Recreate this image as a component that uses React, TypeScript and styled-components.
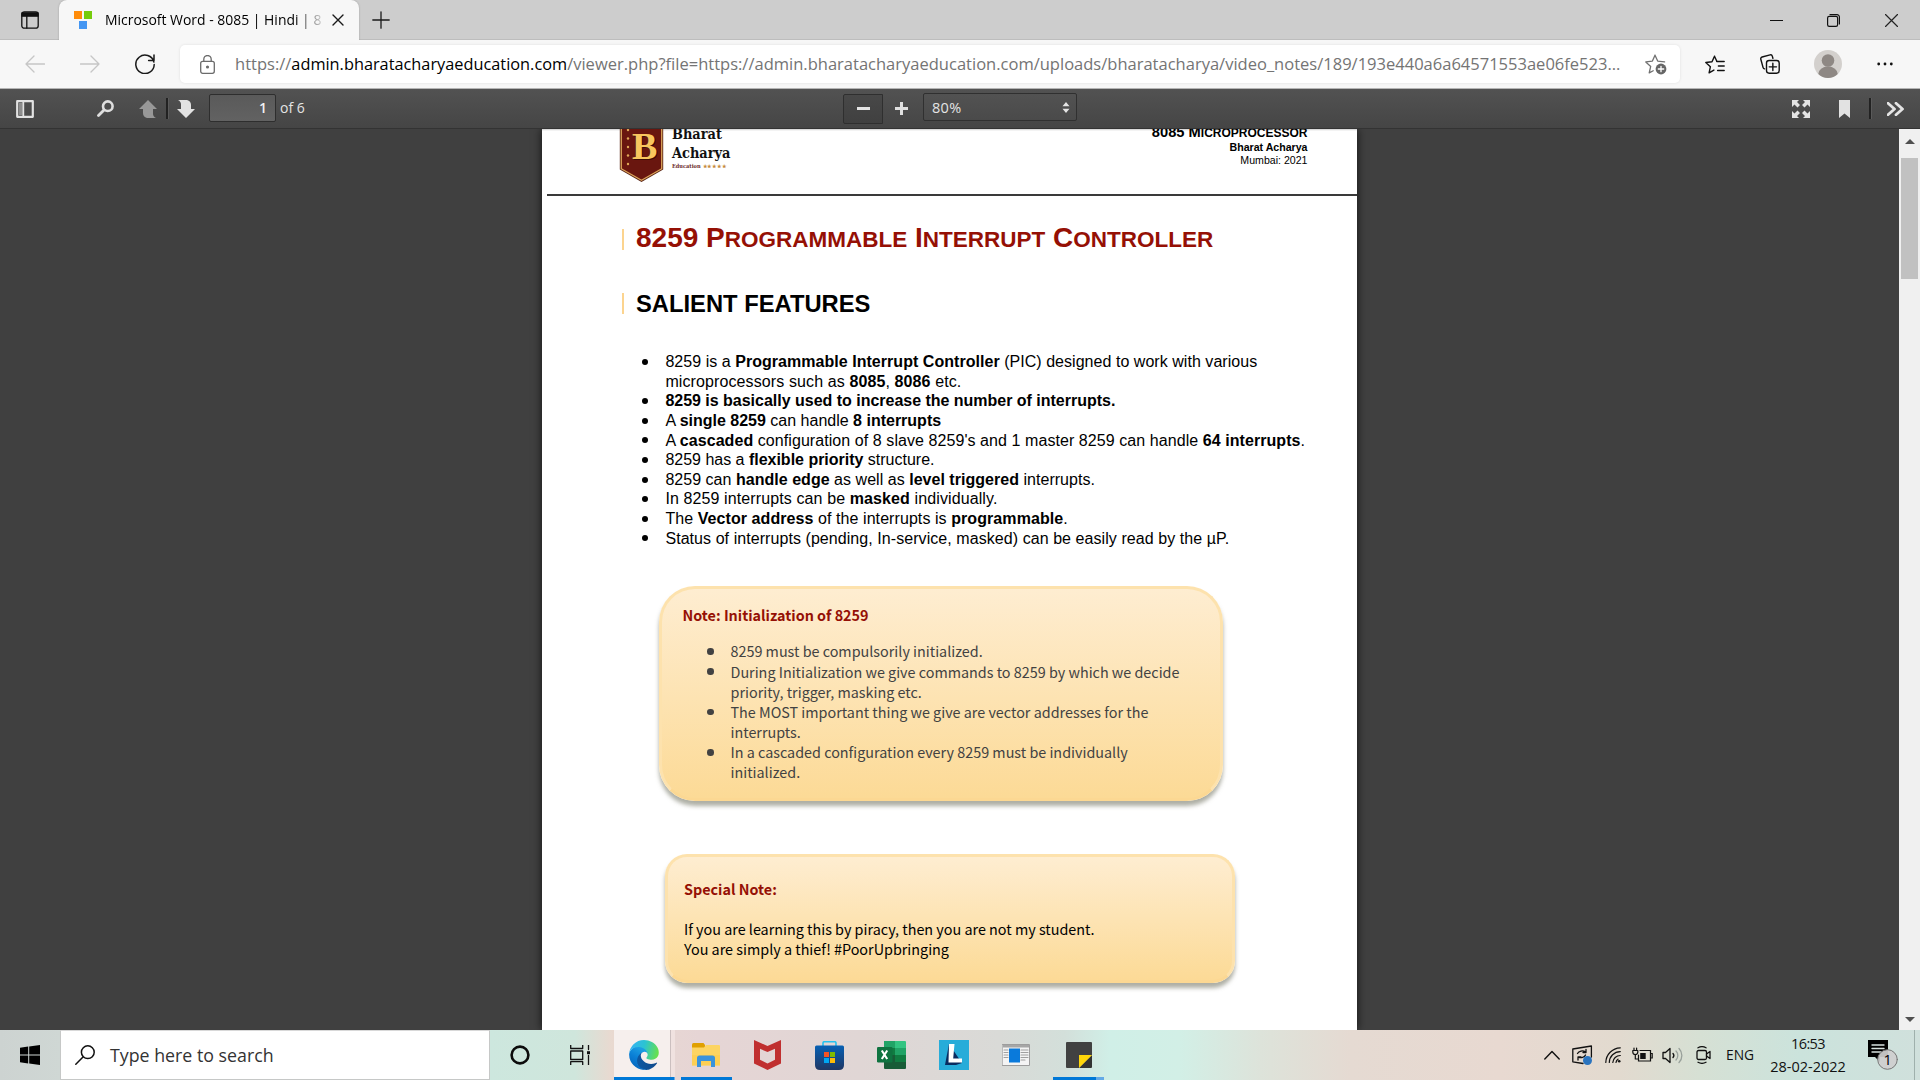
import React from 'react';
import styled, { createGlobalStyle } from 'styled-components';

const GlobalStyle = createGlobalStyle`
  html, body { margin: 0; padding: 0; overflow: hidden; }
  * { box-sizing: border-box; }
`;

const ui = '"Open Sans", "Noto Sans", sans-serif';
const body = '"Liberation Sans", Arial, sans-serif';
const notes = '"Noto Sans CJK SC", sans-serif';

const Screen = styled.div`
  width: 1920px;
  height: 1080px;
  display: flex;
  flex-direction: column;
  overflow: hidden;
  font-family: ${ui};
  white-space: nowrap;
`;

/* ---------- browser chrome ---------- */

const Icon = styled.svg<{ $w: number; $h: number; $ml?: number }>`
  display: block;
  flex: none;
  width: ${(p) => p.$w}px;
  height: ${(p) => p.$h}px;
  margin-left: ${(p) => p.$ml ?? 0}px;
  fill: none;
  stroke-linecap: round;
  stroke-linejoin: round;
`;

const TabStrip = styled.div`
  height: 40px;
  flex: none;
  display: flex;
  align-items: center;
  padding-right: 22px;
  background: #cdcdcd;
  box-shadow: inset 0 -1px 0 #bdbdbd;
`;

const Tab = styled.div`
  width: 300px;
  height: 40px;
  margin-left: 20px;
  padding-left: 15px;
  display: flex;
  align-items: center;
  background: #f7f7f7;
  border-radius: 8px 8px 0 0;
  box-shadow: 0 0 2px rgba(0, 0, 0, 0.25);
`;

const TabTitle = styled.div`
  width: 216px;
  margin-left: 13px;
  overflow: hidden;
  font-size: 13.95px;
  line-height: 22px;
  color: #000;
  mask-image: linear-gradient(90deg, #000 190px, transparent 222px);
`;

const Spacer = styled.div`
  flex: 1;
`;

const AddressBar = styled.div`
  height: 49px;
  flex: none;
  display: flex;
  align-items: center;
  padding-left: 25px;
  background: #f7f7f7;
  border-bottom: 1px solid #b4b4b4;
`;

const UrlField = styled.div`
  width: 1500px;
  height: 38px;
  margin-left: 25px;
  padding-left: 20px;
  display: flex;
  align-items: center;
  background: #fff;
  border-radius: 5px;
  box-shadow: 0 0 3px rgba(0, 0, 0, 0.1);
`;

const UrlText = styled.div`
  width: 1385px;
  margin-left: 20px;
  font-size: 16.52px;
  line-height: 24px;
  color: #747474;
`;

const Host = styled.span`
  font-size: 16.32px;
  color: #000;
`;

/* ---------- pdf toolbar ---------- */

const Toolbar = styled.div`
  height: 40px;
  flex: none;
  display: flex;
  align-items: center;
  padding: 0 15px 0 16px;
  background: linear-gradient(#525252, #454545);
  border-bottom: 1px solid #333;
  color: #e4e4e4;
  font-size: 14px;
`;

const Separator = styled.div<{ $ml: number }>`
  width: 2px;
  height: 21px;
  margin-left: ${(p) => p.$ml}px;
  background: #222;
  box-shadow: 1px 0 0 #5a5a5a;
`;

const PageInput = styled.div`
  width: 67px;
  height: 28px;
  margin: 0 0 2px 14px;
  padding-right: 8px;
  display: flex;
  align-items: center;
  justify-content: flex-end;
  font-weight: 600;
  color: #f2f2f2;
  background: linear-gradient(#5a5a5a, #626262);
  border: 1px solid #2e2e2e;
  border-radius: 2px;
`;

const PageCount = styled.div`
  width: 26px;
  margin: 0 0 2px 4px;
`;

const ZoomOutButton = styled.div`
  width: 40px;
  height: 30px;
  margin-left: 537px;
  padding-left: 13px;
  display: flex;
  align-items: center;
  background: linear-gradient(#484848, #404040);
  border: 1px solid #2f2f2f;
  border-radius: 2px 0 0 2px;
`;

const ZoomSelect = styled.div`
  width: 154px;
  height: 28px;
  margin: 0 0 3px 15px;
  padding: 0 6px 0 8px;
  display: flex;
  align-items: center;
  justify-content: space-between;
  font-size: 14.5px;
  letter-spacing: 0.3px;
  background: linear-gradient(#525252, #4a4a4a);
  border: 1px solid #303030;
  border-radius: 2px;
`;

/* ---------- document ---------- */

const Viewer = styled.div`
  height: 901px;
  flex: none;
  display: flex;
  overflow: hidden;
  background: #404040;
`;

const Page = styled.div`
  width: 815px;
  margin-left: 542px;
  display: flex;
  flex-direction: column;
  background: linear-gradient(#cfcfcf 0, #fff 2px);
  box-shadow: 0 0 9px rgba(0, 0, 0, 0.75);
`;

const PageHeader = styled.div`
  height: 67px;
  flex: none;
  margin-left: 5px;
  padding-left: 72px;
  display: flex;
  align-items: flex-end;
  border-bottom: 2px solid #3a3a3a;
`;

const Crest = styled(Icon)`
  margin-bottom: 11px;
`;

const Brand = styled.div`
  margin: 0 auto 23px 8px;
  font-family: 'DejaVu Serif Condensed', 'DejaVu Serif', serif;
  font-stretch: condensed;
  font-weight: 700;
  font-size: 14.4px;
  line-height: 18.3px;
  color: #111;
`;

const BrandSub = styled.div`
  display: flex;
  font-size: 5.6px;
  line-height: 9px;
  color: #6b2a2a;
`;

const Stars = styled.span`
  margin-left: 2px;
  font-size: 4.8px;
  letter-spacing: 0.9px;
  color: #c58a3c;
`;

const DocInfo = styled.div`
  margin: 0 49.5px 27px 0;
  font-family: ${body};
  font-size: 10.6px;
  line-height: 13px;
  text-align: right;
  color: #000;
`;

const DocTitle = styled.div`
  font-size: 14.7px;
  font-weight: 700;
  line-height: 15px;
`;

const SmallCaps = styled.span<{ $size: number }>`
  font-size: ${(p) => p.$size}px;
`;

const Heading = styled.div<{ $mt: number }>`
  height: 21px;
  flex: none;
  margin: ${(p) => p.$mt}px 0 0 79.5px;
  padding-left: 12.5px;
  display: flex;
  align-items: center;
  border-left: 2px solid #fcd48f;
  font-family: ${body};
  font-weight: 700;
`;

const ChapterTitle = styled.div`
  padding-bottom: 2px;
  font-size: 28px;
  line-height: 21px;
  color: #951005;
`;

const SectionTitle = styled.div`
  font-size: 23.75px;
  line-height: 21px;
  color: #000;
`;

const FeatureList = styled.div`
  margin: 38.3px 0 0 100px;
  font-family: ${body};
  font-size: 16px;
  color: #000;
`;

const FeatureLine = styled.div<{ $ls: number }>`
  height: 19.6px;
  display: flex;
  align-items: center;
  line-height: 19.6px;
  letter-spacing: ${(p) => p.$ls}px;
`;

const Dot = styled.span<{ $on: boolean; $size: number; $gap: number }>`
  width: ${(p) => p.$size}px;
  height: ${(p) => p.$size}px;
  margin-right: ${(p) => p.$gap}px;
  border-radius: 50%;
  background: ${(p) => (p.$on ? 'currentColor' : 'transparent')};
`;

const Callout = styled.div<{ $w: number; $h: number; $mt: number; $ml: number; $r: number; $pad: string }>`
  width: ${(p) => p.$w}px;
  height: ${(p) => p.$h}px;
  flex: none;
  margin: ${(p) => p.$mt}px 0 0 ${(p) => p.$ml}px;
  padding: ${(p) => p.$pad};
  border: 3px solid #fde2ad;
  border-bottom-color: #fcd893;
  border-radius: ${(p) => p.$r}px;
  background: linear-gradient(#feedd1, #fcda96);
  box-shadow: 0 5px 4px rgba(120, 122, 105, 0.6);
  font-family: ${notes};
  font-size: 14.36px;
  line-height: 20.2px;
`;

const CalloutTitle = styled.div<{ $mb: number }>`
  margin-bottom: ${(p) => p.$mb}px;
  font-weight: 700;
  color: #951005;
`;

const NoteLine = styled.div`
  height: 20.2px;
  margin-left: 24.5px;
  display: flex;
  align-items: center;
  color: #424242;
`;

const Scrollbar = styled.div`
  width: 21px;
  margin-left: auto;
  padding-top: 1px;
  display: flex;
  flex-direction: column;
  align-items: center;
  background: #f0f0f0;
`;

const Thumb = styled.div`
  width: 17px;
  height: 121px;
  margin: 14px 0 auto;
  background: #c1c1c1;
`;

const Caret = styled.div<{ $down?: boolean }>`
  margin: ${(p) => (p.$down ? '0 0 8px' : '9px 0 0')};
  border: 5px solid transparent;
  border-top: ${(p) => (p.$down ? '5px solid #505050' : '0')};
  border-bottom: ${(p) => (p.$down ? '0' : '5px solid #505050')};
`;

/* ---------- taskbar ---------- */

const Taskbar = styled.div`
  height: 50px;
  flex: none;
  display: flex;
  align-items: center;
  background: linear-gradient(
    90deg, #cdd3d1 0, #cfd7d4 60px, #cde7de 490px, #cfe6dc 575px, #e9d9d0 612px, #e6d5d5 700px,
    #e0d6d5 860px, #d9dad7 1000px, #d3dfda 1065px, #d0efe7 1110px, #d2efe6 1180px, #dde3da 1260px,
    #e5dad2 1350px, #e8d9d1 1500px, #e2dacf 1620px, #d6e0d4 1700px, #cbe3dc 1800px, #d0e0dc 1920px
  );
`;

const StartButton = styled.div`
  width: 60px;
  padding-left: 20px;
`;

const SearchBox = styled.div`
  width: 430px;
  height: 50px;
  padding-left: 14px;
  display: flex;
  align-items: center;
  background: #fff;
  border: 1px solid #c6c8c7;
  border-top-color: #d8d8d8;
`;

const SearchText = styled.div`
  margin: 0 0 1px 15px;
  font-size: 17.8px;
  color: #333;
`;

const TaskButton = styled.div<{ $w: number; $ml: number; $active?: boolean; $run?: boolean; $more?: number }>`
  width: ${(p) => p.$w}px;
  height: 50px;
  margin-left: ${(p) => p.$ml}px;
  padding-right: ${(p) => (p.$active ? 1 : 0)}px;
  display: flex;
  align-items: center;
  justify-content: center;
  background: ${(p) => (p.$active ? 'linear-gradient(90deg, #f6efed 56px, #cbbfbf 56px 57px, #f0e2e0 57px)' : 'none')};
  border-bottom: ${(p) => (p.$run ? '3px solid #0078d7' : '0')};
  border-image: ${(p) =>
    p.$more ? `linear-gradient(90deg, #0078d7 calc(100% - ${p.$more}px), #64a9e6 calc(100% - ${p.$more}px)) 3` : 'none'};
  & > svg { margin-top: ${(p) => (p.$run ? 3 : 0)}px; }
`;

const TrayGroup = styled.div`
  width: 376px;
  height: 50px;
  display: flex;
  align-items: center;
`;

const Language = styled.div`
  width: 28px;
  margin: 0 0 1px 15px;
  font-size: 13.8px;
  color: #111;
`;

const Clock = styled.div`
  width: 78px;
  margin-left: 15px;
  display: flex;
  flex-direction: column;
  align-items: center;
  font-size: 14.5px;
  line-height: 23px;
  color: #111;
`;

const Time = styled.div`
  letter-spacing: -0.6px;
`;

const ShowDesktop = styled.div`
  width: 6px;
  height: 50px;
  margin-left: auto;
  border-left: 1px solid #9fb0ac;
`;

/* ---------- content ---------- */

type Line = { t: string; ls: number; dot?: boolean };

const features: Line[] = [
  { t: '8259 is a *Programmable Interrupt Controller* (PIC) designed to work with various', ls: 0.04, dot: true },
  { t: 'microprocessors such as *8085*, *8086* etc.', ls: 0.11 },
  { t: '*8259 is basically used to increase the number of interrupts.*', ls: -0.015, dot: true },
  { t: 'A *single 8259* can handle *8 interrupts*', ls: 0, dot: true },
  { t: "A *cascaded* configuration of 8 slave 8259's and 1 master 8259 can handle *64 interrupts*.", ls: 0.07, dot: true },
  { t: '8259 has a *flexible priority* structure.', ls: -0.01, dot: true },
  { t: '8259 can *handle edge* as well as *level triggered* interrupts.', ls: 0.03, dot: true },
  { t: 'In 8259 interrupts can be *masked* individually.', ls: 0.11, dot: true },
  { t: 'The *Vector address* of the interrupts is *programmable*.', ls: 0.075, dot: true },
  { t: 'Status of interrupts (pending, In-service, masked) can be easily read by the µP.', ls: 0.065, dot: true },
];

const noteLines: [string, boolean][] = [
  ['8259 must be compulsorily initialized.', true],
  ['During Initialization we give commands to 8259 by which we decide', true],
  ['priority, trigger, masking etc.', false],
  ['The MOST important thing we give are vector addresses for the', true],
  ['interrupts.', false],
  ['In a cascaded configuration every 8259 must be individually', true],
  ['initialized.', false],
];

const Rich = ({ text }: { text: string }) => (
  <span>{text.split('*').map((part, i) => (i % 2 ? <b key={i}>{part}</b> : part))}</span>
);

const ChromeTop = () => (
  <TabStrip>
    <Icon $w={18} $h={18} $ml={21} viewBox="0 0 18 18" stroke="#111" strokeWidth="1.3">
      <rect x=".8" y=".8" width="16.4" height="16.4" rx="2.5" />
      <path d="M1 1.8h16v3.4H1z" fill="#111" />
      <path d="M5.8 5v12" />
    </Icon>
    <Tab>
      <Icon $w={18} $h={18} viewBox="0 0 18 18">
        <path d="M0 0h8v8H0z" fill="#ff8c0a" />
        <path d="M10 0h8v8h-8z" fill="#76cc0c" />
        <path d="M5 10h8v8H5z" fill="#4496f2" />
      </Icon>
      <TabTitle>Microsoft Word - 8085 | Hindi | 8</TabTitle>
      <Icon $w={12} $h={12} $ml={11} viewBox="0 0 12 12" stroke="#1a1a1a" strokeWidth="1.4">
        <path d="M1 1l10 10M11 1L1 11" />
      </Icon>
    </Tab>
    <Icon $w={18} $h={18} $ml={13} viewBox="0 0 18 18" stroke="#1a1a1a" strokeWidth="1.3">
      <path d="M9 .8v16.4M.8 9h16.4" />
    </Icon>
    <Spacer />
    <Icon $w={13} $h={13} viewBox="0 0 13 13" stroke="#111" strokeWidth="1.2" strokeLinecap="butt">
      <path d="M0 6.5h13" />
    </Icon>
    <Icon $w={13} $h={13} $ml={44} viewBox="0 0 13 13" stroke="#111" strokeWidth="1.2">
      <rect x=".6" y="2.4" width="10" height="10" rx="1.6" />
      <path d="M3 .6h7a2.4 2.4 0 0 1 2.4 2.4v7" />
    </Icon>
    <Icon $w={13} $h={13} $ml={45} viewBox="0 0 13 13" stroke="#222" strokeWidth="1.2">
      <path d="M.5.5l12 12M12.5.5l-12 12" />
    </Icon>
  </TabStrip>
);

const Address = () => (
  <AddressBar>
    <Icon $w={20} $h={18} viewBox="0 0 20 18" stroke="#c6c6c6" strokeWidth="1.3">
      <path d="M19.5 9H1M9 1L1 9l8 8" />
    </Icon>
    <Icon $w={20} $h={18} $ml={35} viewBox="0 0 20 18" stroke="#c6c6c6" strokeWidth="1.3">
      <path d="M.5 9H19M11 1l8 8-8 8" />
    </Icon>
    <Icon $w={20} $h={20} $ml={35} viewBox="0 0 20 20" stroke="#1a1a1a" strokeWidth="1.5">
      <path d="M18.9 8A9.2 9.2 0 1 0 19.2 10.5M19 1v5.6h-5.4" />
    </Icon>
    <UrlField>
      <Icon $w={15} $h={19} viewBox="0 0 15 19" stroke="#6b6b6b" strokeWidth="1.3">
        <rect x=".7" y="6.3" width="13.6" height="12" rx="2" />
        <path d="M3.8 6V4.2a3.7 3.7 0 0 1 7.4 0V6" />
        <circle cx="7.5" cy="12" r=".9" fill="#6b6b6b" />
      </Icon>
      <UrlText>
        https://<Host>admin.bharatacharyaeducation.com</Host>
        /viewer.php?file=https://admin.bharatacharyaeducation.com/uploads/bharatacharya/video_notes/189/193e440a6a64571553ae06fe523...
      </UrlText>
      <Icon $w={22} $h={21} $ml={25} viewBox="0 0 22 21" stroke="#707070" strokeWidth="1.3">
        <path d="M10 1.2l2.7 5.9 6.9.8M10 1.2L7.4 7.1l-6.6.8 4.9 4.500-1.500 6.500 4-2.200" />
        <circle cx="16" cy="15" r="5.400" fill="#666" stroke="none" />
        <path d="M16 12.300v5.400M13.300 15h5.400" stroke="#fff" />
      </Icon>
    </UrlField>
    <Icon $w={20} $h={19} $ml={25} viewBox="0 0 20 19" stroke="#111" strokeWidth="1.4">
      <path d="M9.500 1.200l2.300 5M9.500 1.200L7 6.800l-6.200.7 4.600 4.200-1.300 6.100 4.800-2.700" />
      <path d="M11.800 6.500h7.400M13.400 11h5.800M12.600 15.500h6.600" />
    </Icon>
    <Icon $w={20} $h={20} $ml={35} viewBox="0 0 20 20" stroke="#111" strokeWidth="1.4">
      <path d="M12.900 4.300l-.6-2.200A1.800 1.800 0 0 0 10.100 .9L2.100 3A1.800 1.800 0 0 0 .8 5.200l2.300 8.400a1.800 1.800 0 0 0 1.500 1.300" />
      <rect x="6.500" y="6.500" width="12.700" height="12.700" rx="2.600" />
      <path d="M12.850 9.200v7.300M9.200 12.850h7.300" />
    </Icon>
    <Icon $w={28} $h={28} $ml={34} viewBox="0 0 28 28">
      <circle cx="14" cy="14" r="14" fill="#d3d0cd" />
      <circle cx="14" cy="10.500" r="6.300" fill="#8e8884" />
      <path d="M4.300 24a9.700 7.500 0 0 1 19.400 0A14 14 0 0 1 4.300 24z" fill="#8e8884" />
    </Icon>
    <Icon $w={16} $h={4} $ml={35} viewBox="0 0 16 4">
      <g fill="#111">
        <circle cx="1.700" cy="2" r="1.400" />
        <circle cx="8" cy="2" r="1.400" />
        <circle cx="14.300" cy="2" r="1.400" />
      </g>
    </Icon>
  </AddressBar>
);

const PdfToolbar = () => (
  <Toolbar>
    <Icon $w={18} $h={18} viewBox="0 0 18 18">
      <path d="M1.200 1.200h15.600v15.600H1.200z" stroke="#e2e2e2" strokeWidth="2.200" />
      <path d="M3 3h3.500v12H3z" fill="#8d8d8d" />
      <path d="M7.300 2v14" stroke="#e2e2e2" strokeWidth="1.800" />
    </Icon>
    <Icon $w={17} $h={17} $ml={63} viewBox="0 0 17 17" stroke="#dedede">
      <circle cx="10.800" cy="6.200" r="4.800" strokeWidth="2.600" />
      <path d="M7 10l-5.500 5.500" strokeWidth="2.800" />
    </Icon>
    <Icon $w={18} $h={18} $ml={25} viewBox="0 0 18 18">
      <path d="M9 0l9 9h-4v4.500q0 3 3 4.500H8q-4-1-4-5V9H0z" fill="#989898" />
    </Icon>
    <Separator $ml={9} />
    <Icon $w={18} $h={18} $ml={9} viewBox="0 0 18 18">
      <path d="M9 18l9-9h-4V5q0-4-4-5H1q3 1.500 3 4.500V9H0z" fill="#e2e2e2" />
    </Icon>
    <PageInput>1</PageInput>
    <PageCount>of 6</PageCount>
    <ZoomOutButton>
      <Icon $w={13} $h={3} viewBox="0 0 13 3">
        <path d="M0 0h13v3H0z" fill="#e4e4e4" />
      </Icon>
    </ZoomOutButton>
    <Icon $w={13} $h={13} $ml={12} viewBox="0 0 13 13">
      <path d="M5 0h3v5h5v3H8v5H5V8H0V5h5z" fill="#e0e0e0" />
    </Icon>
    <ZoomSelect>
      80%
      <Icon $w={8} $h={11} viewBox="0 0 8 11">
        <path d="M4 0l3.500 4.200h-7zM4 11l3.500-4.200h-7z" fill="#e4e4e4" />
      </Icon>
    </ZoomSelect>
    <Spacer />
    <Icon $w={18} $h={18} viewBox="0 0 18 18">
      <path
        d="M0 0h7L5 2l3 3-2.500 2.500-3-3L0 7zM18 0v7l-2.500-2.500-3 3L10 5l3-3-2-2zM0 18v-7l2.500 2.500 3-3L8 13l-3 3 2 2zM18 18h-7l2-2-3-3 2.500-2.500 3 3L18 11z"
        fill="#e4e4e4"
      />
    </Icon>
    <Icon $w={11} $h={18} $ml={29} viewBox="0 0 11 18">
      <path d="M0 0h11v18l-5.500-4.500L0 18z" fill="#e2e2e2" />
    </Icon>
    <Separator $ml={19} />
    <Icon $w={18} $h={14} $ml={16} viewBox="0 0 18 14" stroke="#e4e4e4" strokeWidth="2.800" strokeLinecap="butt" strokeLinejoin="miter">
      <path d="M1 1.200L7.500 7 1 12.800M9 1.200L15.500 7 9 12.800" />
    </Icon>
  </Toolbar>
);

const Document = () => (
  <Page>
    <PageHeader>
      <Crest $w={45} $h={66} viewBox="0 0 45 66">
        <path d="M.8 0v52.500L22.500 65 44.200 52.500V0z" fill="#5a2416" />
        <path d="M2.300 0v51.700L22.500 63.300 42.700 51.700V0z" fill="#69160f" stroke="#dba35a" strokeWidth="1.300" />
        <g fill="#e0a857">
          <circle cx="9" cy="13" r="1.200" />
          <circle cx="9" cy="21.500" r="1.200" />
          <circle cx="9" cy="30" r="1.200" />
          <circle cx="9" cy="38.500" r="1.200" />
          <circle cx="9" cy="47" r="1.200" />
        </g>
        <text x="14" y="43" fontFamily="Liberation Serif" fontWeight="700" fontSize="38" fill="#3c0b07">B</text>
        <text x="13" y="42" fontFamily="Liberation Serif" fontWeight="700" fontSize="38" fill="#f8c65e">B</text>
      </Crest>
      <Brand>
        Bharat
        <br />
        Acharya
        <BrandSub>
          Education<Stars>★★★★★</Stars>
        </BrandSub>
      </Brand>
      <DocInfo>
        <DocTitle>
          8085 M<SmallCaps $size={12}>ICROPROCESSOR</SmallCaps>
        </DocTitle>
        <b>Bharat Acharya</b>
        <br />
        Mumbai: 2021
      </DocInfo>
    </PageHeader>
    <Heading $mt={32.5}>
      <ChapterTitle>
        8259 P<SmallCaps $size={22.5}>ROGRAMMABLE</SmallCaps> I<SmallCaps $size={22.5}>NTERRUPT</SmallCaps> C
        <SmallCaps $size={22.5}>ONTROLLER</SmallCaps>
      </ChapterTitle>
    </Heading>
    <Heading $mt={43.5}>
      <SectionTitle>SALIENT FEATURES</SectionTitle>
    </Heading>
    <FeatureList>
      {features.map((f) => (
        <FeatureLine key={f.t} $ls={f.ls}>
          <Dot $on={!!f.dot} $size={6} $gap={17.4} />
          <Rich text={f.t} />
        </FeatureLine>
      ))}
    </FeatureList>
    <Callout $w={564} $h={214.5} $mt={37.9} $ml={117} $r={36} $pad="16px 20.5px">
      <CalloutTitle $mb={16}>Note: Initialization of 8259</CalloutTitle>
      {noteLines.map(([t, dot]) => (
        <NoteLine key={t}>
          <Dot $on={dot} $size={6.5} $gap={17} />
          {t}
        </NoteLine>
      ))}
    </Callout>
    <Callout $w={570.5} $h={129} $mt={53.3} $ml={122.5} $r={22} $pad="22px 16.5px">
      <CalloutTitle $mb={20}>Special Note:</CalloutTitle>
      If you are learning this by piracy, then you are not my student.
      <br />
      You are simply a thief! #PoorUpbringing
    </Callout>
  </Page>
);

const EdgeIcon = () => (
  <Icon $w={30} $h={30} viewBox="0 0 257 259">
    <defs>
      <linearGradient id="e1" x1="63" y1="178" x2="241" y2="178" gradientUnits="userSpaceOnUse">
        <stop offset="0" stopColor="#0c59a4" />
        <stop offset="1" stopColor="#114a8b" />
      </linearGradient>
      <linearGradient id="e2" x1="120" y1="90" x2="40" y2="230" gradientUnits="userSpaceOnUse">
        <stop offset="0" stopColor="#1b9de2" />
        <stop offset=".5" stopColor="#0a7fd6" />
        <stop offset="1" stopColor="#0669bf" />
      </linearGradient>
      <linearGradient id="e3" x1="20" y1="70" x2="240" y2="130" gradientUnits="userSpaceOnUse">
        <stop offset="0" stopColor="#35b5ee" />
        <stop offset=".45" stopColor="#2bc3d2" />
        <stop offset="1" stopColor="#66e04f" />
      </linearGradient>
    </defs>
    <path
      fill="url(#e1)"
      d="M235.680 195.460a93.730 93.730 0 0 1-10.540 4.710 101.870 101.870 0 0 1-35.900 6.460c-47.320 0-88.540-32.550-88.540-74.320A31.480 31.480 0 0 1 117.130 105c-42.800 1.800-53.800 46.400-53.800 72.530 0 73.880 68.090 81.370 82.760 81.370 7.910 0 19.840-2.300 27-4.560l1.310-.44a128.340 128.340 0 0 0 66.600-52.800 4 4 0 0 0-5.320-5.640z"
    />
    <path
      fill="url(#e2)"
      d="M105.700 246.500a79.200 79.200 0 0 1-22.740-21.340 80.720 80.720 0 0 1 34.160-120c3.540-1.670 9.580-4.700 17.630-4.560a33.100 33.100 0 0 1 24.760 13.190 32.600 32.600 0 0 1 6.680 18.660c0-.2 24.500-79.640-80.100-79.640-43.900 0-86.090 36.900-86.090 73.400a130.150 130.150 0 0 0 12.110 56 128 128 0 0 0 156.380 67.110 75.550 75.550 0 0 1-62.780-8z"
    />
    <path
      fill="url(#e3)"
      d="M152.330 148.860c-.81 1.050-3.300 2.500-3.300 5.660 0 2.610 1.700 5.120 4.720 7.230 14.380 10 41.490 8.680 41.560 8.680a59.560 59.560 0 0 0 30.270-8.350 61.380 61.380 0 0 0 30.430-52.880c.26-22.410-8-37.310-11.340-43.910C223.450 23.870 177.720 0 128 0A128 128 0 0 0 0 126.200c.48-36.540 36.800-66.050 80-66.050 3.500 0 23.460.34 42 10.070 16.340 8.580 24.900 18.940 30.850 29.210 6.180 10.670 7.280 24.150 7.280 29.520s-2.740 13.330-7.800 19.910z"
    />
  </Icon>
);

const Tray = () => (
  <TrayGroup>
    <Icon $w={16} $h={10} viewBox="0 0 16 10" stroke="#111" strokeWidth="1.400">
      <path d="M.8 9L8 1.500 15.200 9" />
    </Icon>
    <Icon $w={21} $h={21} $ml={12} viewBox="0 0 21 21" stroke="#111" strokeWidth="1.300">
      <path d="M11 18.500L.8 16.800V4L19.400 1v11" />
      <path d="M5.500 8.500a5 4 0 0 1 8-1.500M14 4.500V7.500h-3M13.500 10a5 4 0 0 1-7 2.200M6 15v-3h3" />
      <circle cx="15.500" cy="15.500" r="4.500" fill="#2a74bf" stroke="none" />
    </Icon>
    <Icon $w={16} $h={16} $ml={12} viewBox="0 0 16 16" stroke="#111" strokeWidth="1.200">
      <path d="M.8 15.500A15 15 0 0 1 15.300.8M4.300 15.500A11 11 0 0 1 15.300 4.600M7.800 15.500a7.500 7.500 0 0 1 7.500-7M11 15.500a4.500 4.500 0 0 1 2-3.300" />
      <circle cx="14.200" cy="14.200" r="1.300" fill="#111" stroke="none" />
    </Icon>
    <Icon $w={21} $h={16} $ml={11} viewBox="0 0 21 16" stroke="#111" strokeWidth="1.200">
      <path d="M8 3.500h10.500v10.500H6.500V8M19.200 6.500h1v4.500h-1" strokeLinejoin="miter" />
      <path d="M8.200 6h5.500v6H8.200z" fill="#111" stroke="none" />
      <path d="M.8 3.500h5v1.500a2.500 2.500 0 0 1-5 0zM2 1v2M4.600 1v2M3.300 8v4h2.500" />
    </Icon>
    <Icon $w={21} $h={17} $ml={9} viewBox="0 0 21 17" stroke="#111" strokeWidth="1.300">
      <path d="M1 5.500h2.500L8 1.500v14l-4.500-4H1z" />
      <path d="M11 6.500a3 3 0 0 1 0 4" />
      <path d="M14 4a6.500 6.500 0 0 1 0 9M17 1.500a10 10 0 0 1 0 14" stroke="#98a09b" />
    </Icon>
    <Icon $w={15} $h={18} $ml={13} viewBox="0 0 15 18" stroke="#111" strokeWidth="1.300">
      <rect x="1" y="4.500" width="9.500" height="9" rx="1.500" />
      <path d="M10.500 8l3.500-2.500v7L10.500 10M2 1.800a8 8 0 0 1 8 0M2 16.200a8 8 0 0 0 8 0" />
    </Icon>
    <Language>ENG</Language>
    <Clock>
      <Time>16:53</Time>
      <div>28-02-2022</div>
    </Clock>
    <Icon $w={31} $h={30} $ml={21} viewBox="0 0 31 30">
      <path d="M0 0h20v17h-8v5l-5-5H0z" fill="#000" />
      <path d="M4 5h12M4 8.500h12M4 12h9" stroke="#d8e2df" strokeWidth="1.400" />
      <circle cx="19.500" cy="19.500" r="9.800" fill="#cfcfcf" fillOpacity=".93" stroke="#777" />
      <text x="15.500" y="24.800" fontFamily="Open Sans" fontSize="14.500" fill="#000" stroke="none">1</text>
    </Icon>
    <ShowDesktop />
  </TrayGroup>
);

const Bottom = () => (
  <Taskbar>
    <StartButton>
      <Icon $w={20} $h={20} viewBox="0 0 20 20">
        <path d="M0 2.800l8.200-1.200v7.900H0zM9.200 1.500L20 0v9.500H9.200zM0 10.500h8.200v7.900L0 17.200zM9.200 10.500H20V20L9.200 18.500z" fill="#000" />
      </Icon>
    </StartButton>
    <SearchBox>
      <Icon $w={20} $h={20} viewBox="0 0 20 20" stroke="#111" strokeWidth="1.500">
        <circle cx="12.800" cy="7.200" r="6.400" />
        <path d="M8 12L.8 19.200" />
      </Icon>
      <SearchText>Type here to search</SearchText>
    </SearchBox>
    <Icon $w={20} $h={20} $ml={20} viewBox="0 0 20 20" stroke="#0c0c0c" strokeWidth="2.600">
      <circle cx="10" cy="10" r="8.400" />
    </Icon>
    <Icon $w={21} $h={20} $ml={40} viewBox="0 0 21 20" stroke="#111" strokeWidth="1.300" strokeLinecap="butt" strokeLinejoin="miter">
      <path d="M.7 0v3.500h12V0M.7 6h12v8.500h-12zM.7 20v-3.300h12V20M18.500 0v4.500M18.500 10.500V20" />
      <path d="M17 6.200h3v3h-3z" fill="#111" stroke="none" />
    </Icon>
    <TaskButton $w={61} $ml={23} $active $run $more={4}>
      <EdgeIcon />
    </TaskButton>
    <TaskButton $w={51} $ml={6} $run>
      <Icon $w={28} $h={24} $ml={-1} viewBox="0 0 28 24">
        <path d="M0 1.500Q0 0 1.500 0h10L13 2v3H0z" fill="#e0a000" />
        <path d="M0 4.500h12l2-2.500h13q1 0 1 1v19.500H0z" fill="#fcd462" />
        <path d="M0 12h28v10.500H0z" fill="#fdcb4b" opacity=".6" />
        <path d="M5 24v-9q0-2.500 2.500-2.500h13q2.500 0 2.500 2.500v9h-4v-6H9v6z" fill="#3a93dc" />
      </Icon>
    </TaskButton>
    <TaskButton $w={61} $ml={5}>
      <Icon $w={27} $h={30} viewBox="0 0 27 30">
        <path d="M0 0l13.500 6L27 0v23.500L13.500 30 0 23.500zM6 8.800v11l7.500 3.700 7.500-3.700v-11L13.500 12z" fillRule="evenodd" fill="#c02f2f" />
      </Icon>
    </TaskButton>
    <TaskButton $w={61} $ml={1}>
      <Icon $w={29} $h={29} viewBox="0 0 29 29">
        <defs>
          <linearGradient id="s1" x1="0" y1="0" x2="0" y2="1">
            <stop offset="0" stopColor="#0660b4" />
            <stop offset="1" stopColor="#203764" />
          </linearGradient>
        </defs>
        <path d="M8 5V2q0-1.300 1.300-1.300h10.400Q21 .7 21 2v3" stroke="#25c2ef" strokeWidth="1.600" />
        <path d="M0 6q0-1.500 1.500-1.500h26Q29 4.500 29 6v18q0 5-5 5H5q-5 0-5-5z" fill="url(#s1)" />
        <path d="M9 11h5v5H9z" fill="#f35325" />
        <path d="M15 11h5v5h-5z" fill="#7fbb00" />
        <path d="M9 17h5v5H9z" fill="#00a6f2" />
        <path d="M15 17h5v5h-5z" fill="#ffbb08" />
      </Icon>
    </TaskButton>
    <TaskButton $w={61} $ml={1}>
      <Icon $w={29} $h={28} viewBox="0 0 29 28">
        <path d="M7 0h11v7H7z" fill="#21a366" />
        <path d="M18 0h10q1 0 1 1v6H18z" fill="#33c481" />
        <path d="M7 7h11v7H7z" fill="#107c41" />
        <path d="M18 7h11v7H18z" fill="#21a366" />
        <path d="M7 14h11v7H7z" fill="#185c37" />
        <path d="M18 14h11v7H18z" fill="#107c41" />
        <path d="M7 21h22v6q0 1-1 1H8q-1 0-1-1z" fill="#185c37" />
        <rect x="0" y="6" width="15.500" height="15.500" rx="1.200" fill="#0f7340" />
        <path d="M4.800 9.500l5.400 8.500M10.200 9.500L4.800 18" stroke="#fff" strokeWidth="2.100" strokeLinecap="butt" />
      </Icon>
    </TaskButton>
    <TaskButton $w={61} $ml={1}>
      <Icon $w={30} $h={30} $ml={1} viewBox="0 0 30 30">
        <path d="M0 0h30v30H0z" fill="#27acd9" />
        <path d="M10 4L6 25h11l6-2z" fill="#0a2c60" />
        <path d="M10 4h5.500l-1.300 14.500H23v4H9.500z" fill="#fff" />
      </Icon>
    </TaskButton>
    <TaskButton $w={61} $ml={1}>
      <Icon $w={28} $h={22} viewBox="0 0 28 22">
        <path d="M.5.500h27v21H.5z" fill="#f4f4f4" stroke="#9d9d9d" />
        <path d="M1 1h26v2.500H1z" fill="#a6a6a6" />
        <path d="M2 6h4M2 8.500h4M2 11h4M2 13.500h4M19 6h7M19 8.500h7M19 11h7M19 13.500h7M19 16h4" stroke="#a0a0a0" strokeWidth="1.100" />
        <path d="M7 4.500h11v14H7z" fill="#0a7adb" />
      </Icon>
    </TaskButton>
    <TaskButton $w={51} $ml={7} $run $more={10}>
      <Icon $w={26} $h={26} viewBox="0 0 26 26">
        <path d="M1 0h24q1 0 1 1v12L13 26H1q-1 0-1-1V1q0-1 1-1z" fill="#414141" />
        <path d="M26 13v12q0 1-1 1H13z" fill="#333" />
        <path d="M13 26V13h13z" fill="#ffd60a" />
      </Icon>
    </TaskButton>
    <Spacer />
    <Tray />
  </Taskbar>
);

export default function App() {
  return (
    <Screen>
      <GlobalStyle />
      <ChromeTop />
      <Address />
      <PdfToolbar />
      <Viewer>
        <Document />
        <Scrollbar>
          <Caret />
          <Thumb />
          <Caret $down />
        </Scrollbar>
      </Viewer>
      <Bottom />
    </Screen>
  );
}
